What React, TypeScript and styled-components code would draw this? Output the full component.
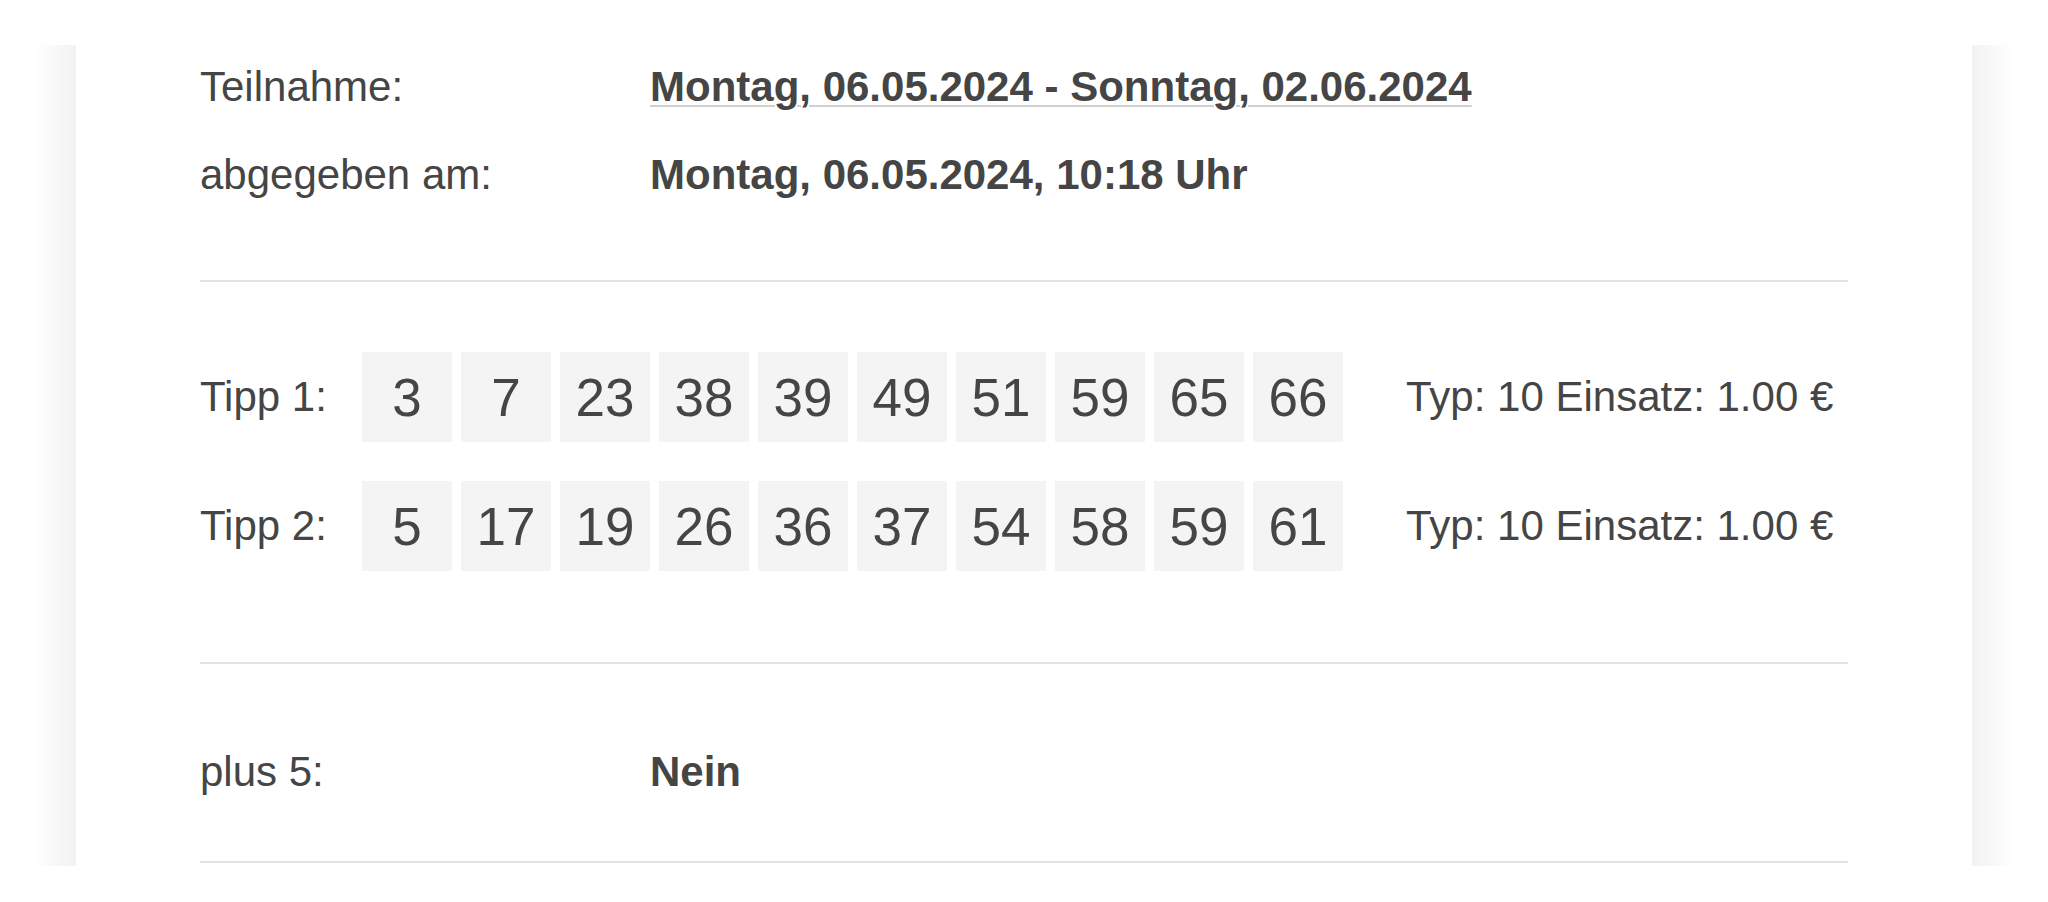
import React from 'react';
import styled, { createGlobalStyle } from 'styled-components';

const GlobalStyle = createGlobalStyle`
  body {
    margin: 0;
    background: #ffffff;
    font-family: 'Liberation Sans', Arial, Helvetica, sans-serif;
    color: #454545;
  }
`;

const Frame = styled.div`
  margin: 45px 33px 0;
  height: 821px;
  padding: 0 43px;
  background: linear-gradient(
    to right,
    #ffffff 0,
    #f2f2f2 43px,
    #f2f2f2 calc(100% - 43px),
    #ffffff 100%
  );
`;

const Card = styled.div`
  height: 100%;
  background: #ffffff;
  padding: 0 124px;
`;

const InfoList = styled.div`
  display: flex;
  flex-direction: column;
  gap: 4px;
`;

const InfoRow = styled.div`
  display: grid;
  grid-template-columns: 450px 1fr;
  line-height: 84px;
  height: 84px;
`;

const Label = styled.span`
  font-size: 42px;
  color: #454545;
`;

const Value = styled.span<{ underlined?: boolean }>`
  font-size: 42px;
  font-weight: bold;
  color: #454545;
  text-decoration: ${props => (props.underlined ? 'underline' : 'none')};
  text-decoration-color: #cfcfcf;
  text-decoration-thickness: 2px;
  text-underline-offset: 4px;
`;

const Divider = styled.div<{ top?: number }>`
  height: 2px;
  background: #e3e3e3;
  margin-top: ${props => props.top || 0}px;
`;

const TippSection = styled.div`
  display: flex;
  flex-direction: column;
  gap: 39px;
  padding: 70px 0 91px;
`;

const TippRow = styled.div`
  display: flex;
  align-items: center;
  height: 90px;
`;

const TippLabel = styled.span`
  width: 162px;
  font-size: 42px;
  color: #454545;
`;

const Numbers = styled.div`
  display: flex;
  gap: 9px;
`;

const Ball = styled.div`
  width: 90px;
  height: 90px;
  background: #f4f4f4;
  display: flex;
  align-items: center;
  justify-content: center;
  font-size: 53px;
  color: #454545;
`;

const TippMeta = styled.span`
  margin-left: 63px;
  font-size: 42px;
  color: #454545;
`;

const PlusSection = styled.div`
  padding: 66px 0 47px;
`;

type Tipp = {
  numbers: number[];
  typ: number;
  einsatz: string;
};

const tipps: Tipp[] = [
  { numbers: [3, 7, 23, 38, 39, 49, 51, 59, 65, 66], typ: 10, einsatz: '1.00' },
  { numbers: [5, 17, 19, 26, 36, 37, 54, 58, 59, 61], typ: 10, einsatz: '1.00' },
];

const App = () => (
  <>
    <GlobalStyle />
    <Frame>
      <Card>
        <InfoList>
          <InfoRow>
            <Label>Teilnahme:</Label>
            <Value underlined>Montag, 06.05.2024 - Sonntag, 02.06.2024</Value>
          </InfoRow>
          <InfoRow>
            <Label>abgegeben am:</Label>
            <Value>Montag, 06.05.2024, 10:18 Uhr</Value>
          </InfoRow>
        </InfoList>

        <Divider top={63} />

        <TippSection>
          {tipps.map((tipp, i) => (
            <TippRow key={i}>
              <TippLabel>Tipp {i + 1}:</TippLabel>
              <Numbers>
                {tipp.numbers.map(n => (
                  <Ball key={n}>{n}</Ball>
                ))}
              </Numbers>
              <TippMeta>
                Typ: {tipp.typ} Einsatz: {tipp.einsatz} €
              </TippMeta>
            </TippRow>
          ))}
        </TippSection>

        <Divider />

        <PlusSection>
          <InfoRow>
            <Label>plus 5:</Label>
            <Value>Nein</Value>
          </InfoRow>
        </PlusSection>

        <Divider />
      </Card>
    </Frame>
  </>
);

export default App;
